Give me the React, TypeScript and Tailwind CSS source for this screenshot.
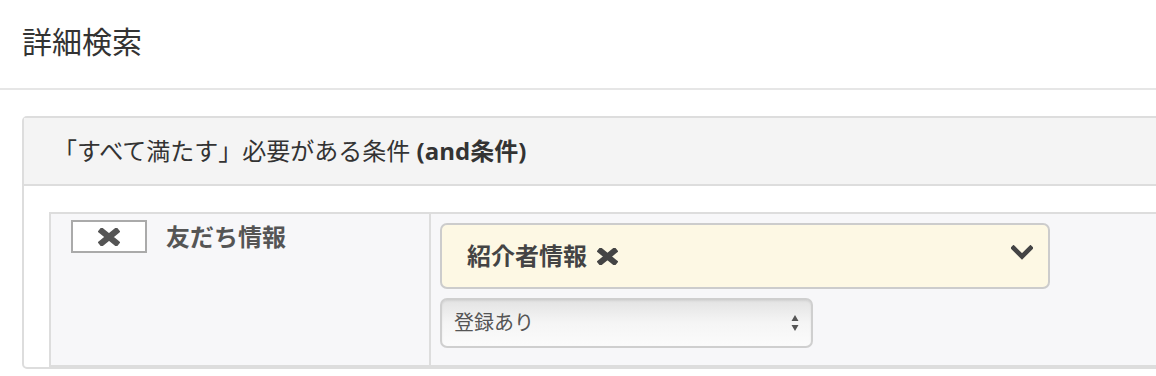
const font = { fontFamily: '"Open Sans", "Noto Sans CJK JP", sans-serif' };

function HeavyX({ className }: { className?: string }) {
  return (
    <svg viewBox="0 0 20 16" className={className} fill="none">
      <path d="M3.6 2.8 L16.4 13.2 M16.4 2.8 L3.6 13.2" stroke="currentColor" strokeWidth="5.6" strokeLinecap="square" />
    </svg>
  );
}

function Chevron({ className }: { className?: string }) {
  return (
    <svg viewBox="0 0 22 15" className={className} fill="none">
      <path d="M2.5 3 L11 11.5 L19.5 3" stroke="currentColor" strokeWidth="4.6" strokeLinecap="square" />
    </svg>
  );
}

export default function App() {
  return (
    <div className="w-[1156px] h-[376px] overflow-hidden bg-white text-[#333]" style={font}>
      {/* Title */}
      <div className="h-[90px] pl-[22px] pt-[22px] border-b-2 border-[#e6e6e6]">
        <h1 className="text-[30px] leading-[40px] text-[#333]">詳細検索</h1>
      </div>

      {/* Panel */}
      <div className="mt-[26px] ml-[22px] w-[1200px] border-2 border-[#dddddd] rounded-[5px]">
        <div className="h-[68px] bg-[#f4f4f4] border-b-2 border-[#dddddd] flex items-center pl-[29px]">
          <span className="text-[24px] text-[#333]">
            「すべて満たす」必要がある条件 <b className="font-bold">(and条件)</b>
          </span>
        </div>

        <div className="pt-[26px] pl-[25px]">
          <div className="flex border-2 border-[#dddddd] bg-[#f7f7f9] h-[155px]">
            {/* left cell */}
            <div className="w-[380px] border-r-2 border-[#dddddd] flex items-start pl-[20px] pt-[6px]">
              <button className="w-[76px] h-[33px] bg-white border-2 border-[#aaaaaa] flex items-center justify-center text-[#555]">
                <HeavyX className="w-[22px] h-[18px]" />
              </button>
              <span className="ml-[19px] text-[24px] leading-[33px] font-bold text-[#555]">友だち情報</span>
            </div>

            {/* right cell */}
            <div className="flex-1 pl-[9px] pt-[9px]">
              <div className="w-[610px] h-[66px] bg-[#fdf8e4] border-2 border-[#cccccc] rounded-[7px] flex items-center pl-[25px] pr-[15px]">
                <span className="text-[24px] font-bold text-[#444]">紹介者情報</span>
                <HeavyX className="ml-[10px] w-[21px] h-[17px] text-[#444]" />
                <Chevron className="ml-auto -mt-[8px] w-[22px] h-[15px] text-[#444]" />
              </div>
              <div className="mt-[9px] w-[373px] h-[50px] rounded-[7px] border-2 border-[#cfcfcf] bg-gradient-to-b from-[#e3e3e3] via-[#f5f5f5] to-[#fbfbfb] shadow-[inset_0_1px_2px_rgba(0,0,0,0.08)] flex items-center pl-[12px] pr-[12px]">
                <span className="text-[20px] text-[#555]">登録あり</span>
                <svg viewBox="0 0 8 18" className="ml-auto w-[8px] h-[18px] text-[#555]">
                  <path d="M4 1 L7.5 7 L0.5 7 Z M4 17 L7.5 11 L0.5 11 Z" fill="currentColor" />
                </svg>
              </div>
            </div>
          </div>
        </div>
      </div>
    </div>
  );
}
